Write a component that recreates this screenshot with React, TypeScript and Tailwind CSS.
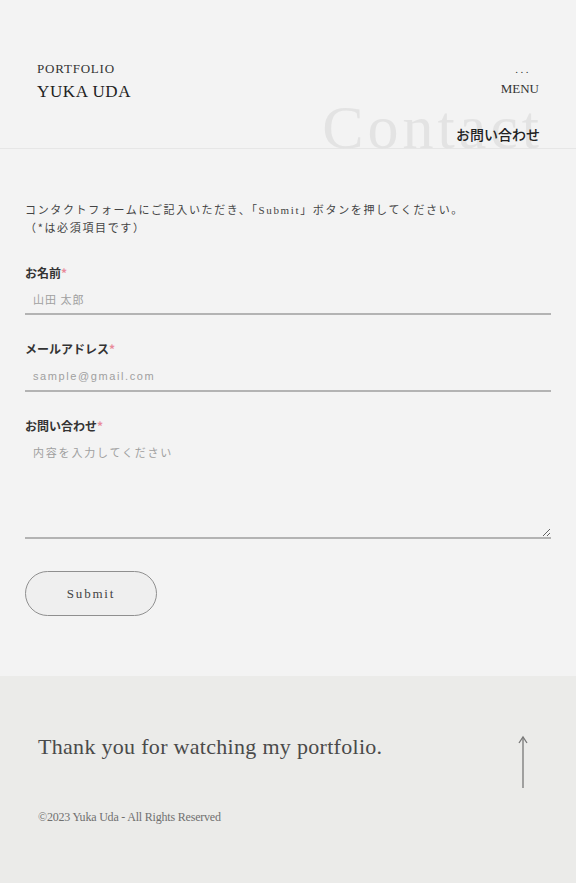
import React from "react";

const serif = "font-['Liberation_Serif','Noto_Sans_CJK_JP',serif]";
const jp = "font-['Noto_Sans_CJK_JP','Liberation_Serif',serif]";

export default function App() {
  return (
    <div className="w-full min-h-[883px] bg-[#f3f3f3] text-[#333]">
      {/* Header */}
      <header className="h-[149px] border-b border-[#e6e6e6] px-[37px] pt-[61px]">
        <div className="flex justify-between h-[41px]">
          <div className={serif}>
            <div className="text-[13px] leading-[16px] tracking-[0.8px] text-[#333]">PORTFOLIO</div>
            <div className="mt-[4px] text-[17px] leading-[21px] tracking-[0.6px] text-[#222]">YUKA UDA</div>
          </div>
          <div className={`${serif} flex flex-col items-end`}>
            <div className="text-[11px] leading-[12px] tracking-[2.5px] text-[#333] mr-[8px] mt-[2px]">...</div>
            <div className="text-[13px] leading-[16px] text-[#333] mt-[6px]">MENU</div>
          </div>
        </div>
        <div className="flex justify-end mt-[-6px] mr-[-4px]">
          <div className="relative h-[46px]">
            <div className={`${serif} mt-[8px] text-[62px] leading-[46px] tracking-[4px] text-[#e3e3e3]`}>Contact</div>
            <div className={`${jp} absolute right-[3px] top-[28px] text-[14px] leading-[20px] font-medium text-[#222]`}>お問い合わせ</div>
          </div>
        </div>
      </header>

      {/* Form */}
      <main className="px-[25px] pt-[52px] pb-[60px]">
        <p className={`${jp} text-[11px] leading-[17px] tracking-[1.65px] text-[#444]`}>
          コンタクトフォームにご記入いただき、「<span className={serif}>Submit</span>」ボタンを押してください。
          <br />（*は必須項目です）
        </p>

        <div className="mt-[28px]">
          <label className={`${jp} block text-[12px] leading-[18px] font-bold text-[#333]`}>
            お名前<span className="text-[#e98a9a]">*</span>
          </label>
          <input
            className={`${jp} mt-[3px] block w-full h-[30px] border-b-2 border-[#b3b3b3] bg-transparent px-[8px] text-[11px] tracking-[1px] placeholder:text-[#a0a0a0] outline-none`}
            placeholder="山田 太郎"
          />
        </div>

        <div className="mt-[25px]">
          <label className={`${jp} block text-[12px] leading-[18px] font-bold text-[#333]`}>
            メールアドレス<span className="text-[#e98a9a]">*</span>
          </label>
          <input
            className="mt-[4px] block w-full h-[30px] border-b-2 border-[#b3b3b3] bg-transparent px-[8px] text-[11px] tracking-[1.6px] font-['Liberation_Sans',sans-serif] placeholder:text-[#a0a0a0] outline-none"
            placeholder="sample@gmail.com"
          />
        </div>

        <div className="mt-[25px]">
          <label className={`${jp} block text-[12px] leading-[18px] font-bold text-[#333]`}>
            お問い合わせ<span className="text-[#e98a9a]">*</span>
          </label>
          <textarea
            className={`${jp} mt-[4px] block w-full h-[100px] border-b-2 border-[#b3b3b3] bg-transparent px-[8px] pt-[5px] text-[11px] leading-[16px] tracking-[1.8px] placeholder:text-[#a0a0a0] outline-none`}
            placeholder="内容を入力してください"
          />
        </div>

        <button
          className={`${serif} mt-[32px] block w-[132px] h-[45px] rounded-full border border-[#8f8f8f] bg-[#efefef] text-[13px] tracking-[1.8px] text-[#444]`}
        >
          Submit
        </button>
      </main>

      {/* Footer */}
      <footer className="h-[207px] bg-[#ebebe9] px-[38px] pt-[58px]">
        <div className="flex justify-between items-start">
          <div className={`${serif} text-[22px] leading-[28px] text-[#4a4a4a] tracking-[0.3px] mt-[-1px]`}>
            Thank you for watching my portfolio.
          </div>
          <svg width="14" height="54" viewBox="0 0 14 54" className="mr-[8px] mt-[1px]">
            <line x1="7" y1="2" x2="7" y2="53" stroke="#777" strokeWidth="1.3" />
            <path d="M3 8 L7 2 L11 8" fill="none" stroke="#777" strokeWidth="1.3" />
          </svg>
        </div>
        <div className={`${serif} mt-[20px] text-[12px] leading-[16px] text-[#707070] tracking-[-0.2px]`}>
          ©2023 Yuka Uda - All Rights Reserved
        </div>
      </footer>
    </div>
  );
}
